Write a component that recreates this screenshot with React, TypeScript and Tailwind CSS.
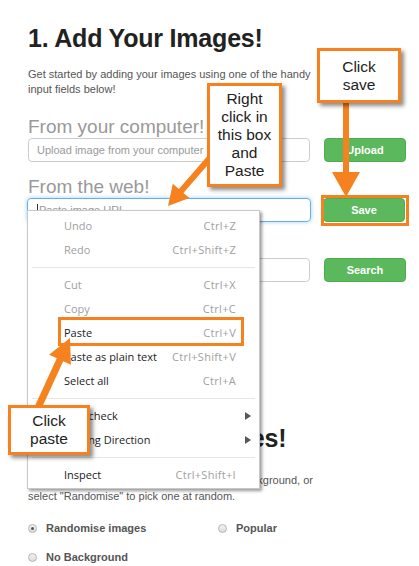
import React from "react";

const ORANGE = "#f5821f";

function arrowPoints(x1: number, y1: number, x2: number, y2: number, sw: number, hw: number, hl: number) {
  const dx = x2 - x1;
  const dy = y2 - y1;
  const L = Math.hypot(dx, dy);
  const ux = dx / L;
  const uy = dy / L;
  const px = -uy;
  const py = ux;
  const bx = x2 - ux * hl;
  const by = y2 - uy * hl;
  const pts: [number, number][] = [
    [x1 + (px * sw) / 2, y1 + (py * sw) / 2],
    [bx + (px * sw) / 2, by + (py * sw) / 2],
    [bx + (px * hw) / 2, by + (py * hw) / 2],
    [x2, y2],
    [bx - (px * hw) / 2, by - (py * hw) / 2],
    [bx - (px * sw) / 2, by - (py * sw) / 2],
    [x1 - (px * sw) / 2, y1 - (py * sw) / 2],
  ];
  return pts.map((p) => p[0].toFixed(1) + "," + p[1].toFixed(1)).join(" ");
}

type Item = { label: string; shortcut?: string; disabled?: boolean; sub?: boolean } | "sep";

const items: Item[] = [
  { label: "Undo", shortcut: "Ctrl+Z", disabled: true },
  { label: "Redo", shortcut: "Ctrl+Shift+Z", disabled: true },
  "sep",
  { label: "Cut", shortcut: "Ctrl+X", disabled: true },
  { label: "Copy", shortcut: "Ctrl+C", disabled: true },
  { label: "Paste", shortcut: "Ctrl+V" },
  { label: "Paste as plain text", shortcut: "Ctrl+Shift+V" },
  { label: "Select all", shortcut: "Ctrl+A" },
  "sep",
  { label: "Spellcheck", sub: true },
  { label: "Writing Direction", sub: true },
  "sep",
  { label: "Inspect", shortcut: "Ctrl+Shift+I" },
];

function GreenButton({ children }: { children: React.ReactNode }) {
  return (
    <div className="w-[82px] h-[24px] rounded-[4px] bg-[#5cb85c] border border-[#4cae4c] flex items-center justify-center text-white font-bold text-[11px]">
      {children}
    </div>
  );
}

function Radio({ checked, label }: { checked?: boolean; label: string }) {
  return (
    <div className="flex items-center">
      <div className="w-[9px] h-[9px] rounded-full border border-[#b5b5b5] bg-[linear-gradient(#f2f2f2,#dcdcdc)] flex items-center justify-center">
        {checked && <div className="w-[3px] h-[3px] rounded-full bg-[#555]" />}
      </div>
      <span className="ml-[9px] text-[11px] font-bold text-[#555] leading-[14px]">{label}</span>
    </div>
  );
}

export default function App() {
  return (
    <div
      className="relative w-[419px] h-[566px] overflow-hidden bg-white"
      style={{ fontFamily: '"Liberation Sans", Arial, sans-serif' }}
    >
      <div className="pl-[28px] pt-[23px]">
        <h1 className="text-[25px] tracking-[-0.2px] font-bold leading-[30px] text-[#222] whitespace-nowrap">1. Add Your Images!</h1>
        <p className="mt-[14px] text-[11px] leading-[15px] text-[#555] w-[300px]">
          Get started by adding your images using one of the handy input fields below!
        </p>

        <div className="mt-[19px] text-[19px] leading-[22px] text-[#999]">From your computer!</div>
        <div className="flex gap-[14px]">
          <div className="w-[282px] h-[24px] rounded-[4px] border border-[#ccc] flex items-center pl-[8px] text-[11px] text-[#999]">
            Upload image from your computer
          </div>
          <GreenButton>Upload</GreenButton>
        </div>

        <div className="mt-[14px] text-[19px] leading-[22px] text-[#999]">From the web!</div>
        <div className="flex gap-[14px]">
          <div className="w-[284px] ml-[-1px] mr-[-2px] h-[24px] rounded-[4px] border border-[#66afe9] shadow-[0_0_4px_rgba(102,175,233,0.6)] flex items-center pl-[9px] text-[11px] text-[#999]">
            <span className="w-px h-[12px] bg-[#333] mr-[1px]" />
            Paste image URL
          </div>
          <GreenButton>Save</GreenButton>
        </div>

        <div className="mt-[14px] text-[19px] leading-[22px] text-[#999]">Search for images!</div>
        <div className="flex gap-[14px]">
          <div className="w-[282px] h-[24px] rounded-[4px] border border-[#ccc]" />
          <GreenButton>Search</GreenButton>
        </div>

        <h2 className="mt-[141px] text-[25px] tracking-[-0.2px] font-bold leading-[30px] text-[#222] whitespace-nowrap">2. Background Styles!</h2>
        <p className="mt-[19px] text-[11px] leading-[16px] text-[#555] whitespace-nowrap">
          Choose one of our images below to use as background, or
          <br />
          select "Randomise" to pick one at random.
        </p>

        <div className="mt-[17px] grid grid-cols-[190px_1fr] gap-y-[15px]">
          <Radio checked label="Randomise images" />
          <Radio label="Popular" />
          <Radio label="No Background" />
        </div>
      </div>

      {/* Context menu */}
      <div
        className="absolute left-[27px] top-[210px] w-[233px] bg-white border border-[#c8c8c8] shadow-[2px_2px_3px_rgba(0,0,0,0.4)] pt-[3px] pb-[1px]"
        style={{ fontFamily: '"Open Sans", "Noto Sans", sans-serif' }}
      >
        {items.map((it, i) =>
          it === "sep" ? (
            <div key={i} className="h-[11px] flex items-center px-[4px]">
              <div className="h-px w-full bg-[#e6e6e6]" />
            </div>
          ) : (
            <div key={i} className="h-[24px] flex items-center pl-[36px] pr-[23px] text-[11px]">
              <span className={it.disabled ? "text-[#a0a0a0]" : "text-[#222]"}>{it.label}</span>
              <span className="ml-auto text-[#a0a0a0] tracking-[0.3px]">{it.shortcut}</span>
              {it.sub && (
                <svg className="absolute right-[8px]" width="6" height="8" viewBox="0 0 6 8">
                  <path d="M0 0 L6 4 L0 8 Z" fill="#555" />
                </svg>
              )}
            </div>
          )
        )}
      </div>

      {/* Paste highlight */}
      <div className="absolute left-[58px] top-[317px] w-[186px] h-[29px] border-[3px] border-[#f5821f]" />
      {/* Save highlight */}
      <div className="absolute left-[321px] top-[195px] w-[88px] h-[31px] border-[3px] border-[#f5821f]" />

      {/* Arrows */}
      <svg className="absolute left-0 top-0" width="419" height="566">
        <polygon points={arrowPoints(215, 152, 168, 206, 6, 22, 20)} fill={ORANGE} />
        <polygon points={arrowPoints(346, 100, 346, 197, 6, 28, 25)} fill={ORANGE} />
        <polygon points={arrowPoints(36, 412, 70, 338, 7, 24, 24)} fill={ORANGE} />
      </svg>

      {/* Callouts */}
      <div className="absolute left-[207px] top-[83px] w-[75px] h-[104px] bg-white border-[3px] border-[#f5821f] shadow-[3px_3px_4px_rgba(0,0,0,0.45)] flex flex-col items-center justify-center text-[15.5px] leading-[18px] text-[#222] text-center">
        <span>Right</span>
        <span>click in</span>
        <span>this box</span>
        <span>and</span>
        <span>Paste</span>
      </div>
      <div className="absolute left-[317px] top-[48px] w-[84px] h-[55px] bg-white border-[3px] border-[#f5821f] shadow-[3px_3px_4px_rgba(0,0,0,0.45)] flex flex-col items-center justify-center text-[15.5px] leading-[18px] text-[#222] text-center">
        <span>Click</span>
        <span>save</span>
      </div>
      <div className="absolute left-[8px] top-[405px] w-[82px] h-[50px] bg-white border-[3px] border-[#f5821f] shadow-[3px_3px_4px_rgba(0,0,0,0.45)] flex flex-col items-center justify-center text-[15.5px] leading-[18px] text-[#222] text-center">
        <span>Click</span>
        <span>paste</span>
      </div>
    </div>
  );
}
